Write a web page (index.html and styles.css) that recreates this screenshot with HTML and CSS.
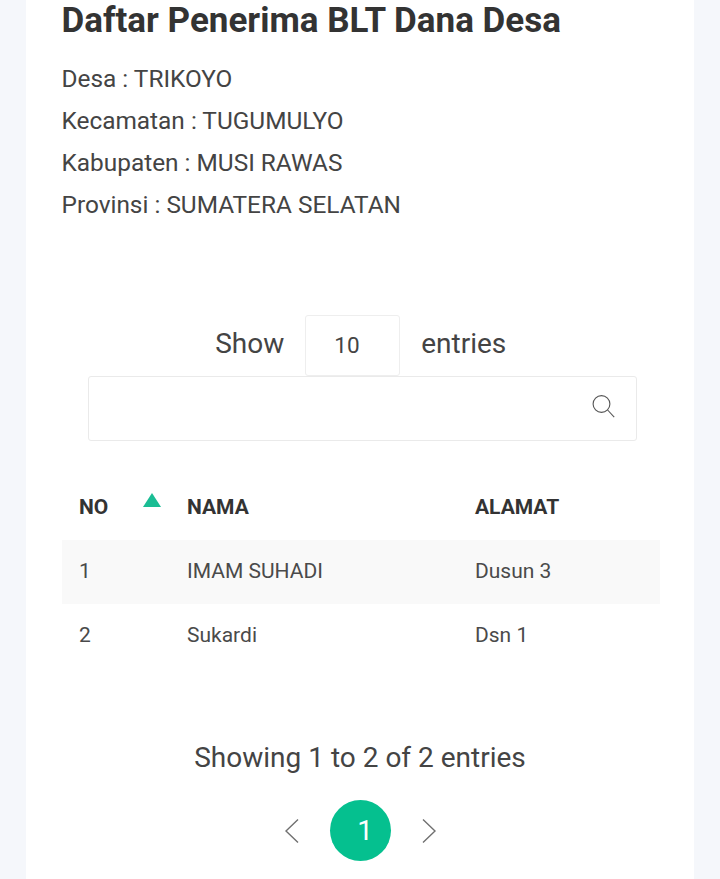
FILE: index.html
```html
<!DOCTYPE html>
<html lang="id">
<head>
<meta charset="utf-8">
<title>Daftar Penerima BLT Dana Desa</title>
<link rel="stylesheet" href="styles.css">
</head>
<body>
<main class="card">
  <h1 class="title">Daftar Penerima BLT Dana Desa</h1>
  <p class="info">Desa : TRIKOYO</p>
  <p class="info">Kecamatan : TUGUMULYO</p>
  <p class="info">Kabupaten : MUSI RAWAS</p>
  <p class="info">Provinsi : SUMATERA SELATAN</p>

  <div class="length">
    <span class="length-text">Show</span>
    <span class="select">10</span>
    <span class="length-text">entries</span>
  </div>
  <div class="search">
    <svg class="search-icon" width="26" height="26" viewBox="0 0 26 26" fill="none" stroke="#555" stroke-width="1.1">
      <circle cx="11.5" cy="11" r="8.4"/>
      <path d="M17.6 17l6.6 7.2"/>
    </svg>
  </div>

  <table class="table">
    <thead>
      <tr>
        <th class="col-no"><span>NO</span><span class="sort"></span></th>
        <th class="col-nama">NAMA</th>
        <th class="col-alamat">ALAMAT</th>
      </tr>
    </thead>
    <tbody>
      <tr class="odd"><td>1</td><td>IMAM SUHADI</td><td>Dusun 3</td></tr>
      <tr><td>2</td><td>Sukardi</td><td>Dsn 1</td></tr>
    </tbody>
  </table>

  <p class="summary">Showing 1 to 2 of 2 entries</p>
  <nav class="pager">
    <svg class="chev" width="16" height="26" viewBox="0 0 16 26" fill="none" stroke="#707070" stroke-width="1.4"><path d="M14 1.5L2 13l12 11.5"/></svg>
    <span class="page">1</span>
    <svg class="chev" width="16" height="26" viewBox="0 0 16 26" fill="none" stroke="#707070" stroke-width="1.4"><path d="M2 1.5L14 13 2 24.5"/></svg>
  </nav>
</main>
</body>
</html>
```
FILE: styles.css
```css
* { box-sizing: border-box; }
html, body { margin: 0; height: 879px; overflow: hidden; }
body {
  background: #f5f7fb;
  font-family: Roboto, "Liberation Sans", sans-serif;
  color: #3b3b3b;
}
.card {
  width: 668px;
  height: 879px;
  margin-left: 26px;
  padding: 0 36px;
  background: #fff;
  overflow: hidden;
}
.title {
  margin: 0 0 25px -0.5px;
  font-size: 35px;
  line-height: 41px;
  font-weight: 700;
  color: #333;
}
.info {
  margin: 0 0 14px -0.5px;
  font-size: 24.4px;
  line-height: 28px;
  color: #444;
}
.info:first-of-type { margin-top: -1px; }
.length {
  margin-top: 96px;
  padding-left: 1.5px;
  display: flex;
  justify-content: center;
  align-items: center;
  gap: 21px;
  font-size: 28px;
  color: #444;
}
.length-text { padding-bottom: 4px; }
.select {
  width: 95px;
  height: 61px;
  border: 1px solid #eee;
  border-radius: 3px;
  padding-left: 28px;
  font-size: 22.5px;
  line-height: 59px;
}
.search {
  width: 549px;
  height: 65px;
  margin: 0 0 0 26px;
  border: 1px solid #eaeaea;
  border-radius: 3px;
  display: flex;
  justify-content: flex-end;
  align-items: center;
  padding: 0 20px 5px 0;
}
.search-icon { display: block; }
.table {
  width: 598px;
  margin-top: 34px;
  border-collapse: collapse;
  table-layout: fixed;
  font-size: 21px;
}
.table th {
  height: 65px;
  padding: 0 0 2px 17px;
  text-align: left;
  font-weight: 700;
  color: #333;
  font-size: 21px;
}
.col-no { width: 108px; position: relative; }
.col-nama { width: 288px; }
.col-alamat { width: 202px; }
.sort {
  position: absolute;
  left: 81px;
  top: 18px;
  border-left: 9px solid transparent;
  border-right: 9px solid transparent;
  border-bottom: 14px solid #1abd94;
}
.table td {
  height: 63.5px;
  padding: 0 0 0 17px;
  color: #4a4a4a;
}
.odd td { padding-bottom: 1px; }
.odd { background: #f9f9f9; }
.summary {
  margin: 73px 0 0;
  text-align: center;
  font-size: 28px;
  line-height: 36px;
  color: #444;
}
.pager {
  margin-top: 24px;
  display: flex;
  justify-content: center;
  align-items: center;
  gap: 30px;
}
.page {
  width: 61px;
  height: 61px;
  border-radius: 50%;
  background: #05c08f;
  color: #fff;
  font-size: 28px;
  line-height: 61px;
  padding-left: 10px;
  text-align: center;
}
```
